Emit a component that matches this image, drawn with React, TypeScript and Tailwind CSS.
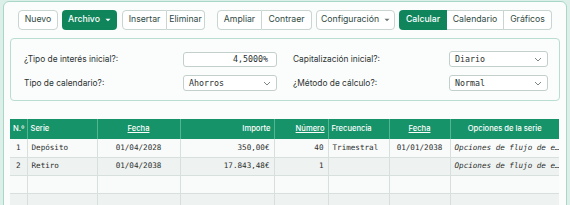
import React from "react";

const ui = { fontFamily: "Inter, 'Noto Sans', sans-serif" };
const mono = { fontFamily: "'DejaVu Sans Mono', 'Liberation Mono', monospace" };

function Caret({ color }: { color: string }) {
  return (
    <svg width="6" height="4" viewBox="0 0 6 4" className="ml-[5px]">
      <path d="M0.5 0.8 L3 3.2 L5.5 0.8 Z" fill={color} />
    </svg>
  );
}

function Chevron() {
  return (
    <svg width="8" height="5" viewBox="0 0 8 5">
      <path d="M1 1 L4 4 L7 1" fill="none" stroke="#7c8784" strokeWidth="1" />
    </svg>
  );
}

const btn =
  "flex h-[20px] items-center justify-center bg-white text-[8.7px] text-[#2f4a42] border border-[#c8d5d0]";

function Select({ value, w }: { value: string; w: string }) {
  return (
    <div
      className={`flex h-[16px] ${w} items-center justify-between rounded-[3px] border border-[#c3cfca] bg-white pl-[5px] pr-[5px] text-[8.3px] text-[#2b2f2e]`}
      style={mono}
    >
      <span>{value}</span>
      <Chevron />
    </div>
  );
}

type Row = {
  n: string;
  serie: string;
  fecha: string;
  importe: string;
  numero: string;
  freq: string;
  fecha2: string;
  op: string;
};

const rows: Row[] = [
  {
    n: "1",
    serie: "Depósito",
    fecha: "01/04/2028",
    importe: "350,00€",
    numero: "40",
    freq: "Trimestral",
    fecha2: "01/01/2038",
    op: "Opciones de flujo de e…",
  },
  {
    n: "2",
    serie: "Retiro",
    fecha: "01/04/2038",
    importe: "17.843,48€",
    numero: "1",
    freq: "",
    fecha2: "",
    op: "Opciones de flujo de e…",
  },
  { n: "", serie: "", fecha: "", importe: "", numero: "", freq: "", fecha2: "", op: "" },
  { n: "", serie: "", fecha: "", importe: "", numero: "", freq: "", fecha2: "", op: "" },
];

export default function App() {
  const th = "h-[20px] border-l border-[#53b690] px-[3px] text-[7.6px] font-medium text-white";
  const td = "h-[18px] border-l border-b border-[#d8e0dd] px-[4px] text-[7.6px] text-[#2b2f2e] whitespace-nowrap overflow-hidden";
  return (
    <div className="h-[205px] w-[570px] overflow-hidden bg-[#dcefe8] pl-[3px] pr-[3px] pt-[1px]" style={ui}>
      <div className="h-[240px] rounded-[6px] border border-[#a9d7c5] bg-[#fbfdfc] px-[6px] pt-[8px]">
        {/* toolbar */}
        <div className="ml-[8px] flex h-[20px] items-center">
          <div className={`${btn} w-[40px] rounded-[4px]`}>Nuevo</div>
          <div className="ml-[4px] flex h-[20px] w-[55px] items-center justify-center rounded-[4px] bg-[#10855c] text-[8.7px] font-medium text-white">
            Archivo
            <Caret color="#ffffff" />
          </div>
          <div className="ml-[5px] flex">
            <div className={`${btn} w-[45px] rounded-l-[4px]`}>Insertar</div>
            <div className={`${btn} w-[38px] rounded-r-[4px] border-l-0`}>Eliminar</div>
          </div>
          <div className="ml-[12px] flex">
            <div className={`${btn} w-[45px] rounded-l-[4px]`}>Ampliar</div>
            <div className={`${btn} w-[50px] rounded-r-[4px] border-l-0`}>Contraer</div>
          </div>
          <div className={`${btn} ml-[4px] w-[79px] rounded-[4px]`}>
            Configuración
            <Caret color="#6b7774" />
          </div>
          <div className="ml-[4px] flex">
            <div className="flex h-[20px] w-[48px] items-center justify-center rounded-l-[4px] bg-[#10855c] text-[8.7px] font-medium text-white">
              Calcular
            </div>
            <div className={`${btn} w-[57px] border-l-0`}>Calendario</div>
            <div className={`${btn} w-[48px] rounded-r-[4px] border-l-0`}>Gráficos</div>
          </div>
        </div>

        {/* params */}
        <div className="mt-[8px] h-[63px] rounded-[4px] border border-[#b9ddcf] bg-[#fbfdfc] pl-[13px] pt-[12px]">
          <div className="grid grid-cols-[253px_255px] gap-x-[16px] gap-y-[8px] text-[8.35px] text-[#2d3331]">
            <div className="flex h-[16px] items-center justify-between">
              <span>¿Tipo de interés inicial?:</span>
              <div
                className="flex h-[15px] w-[94px] items-center justify-end rounded-[3px] border border-[#c3cfca] bg-white pr-[8px] text-[8.3px] text-[#2b2f2e]"
                style={mono}
              >
                4,5000%
              </div>
            </div>
            <div className="flex h-[16px] items-center justify-between">
              <span>Capitalización inicial?:</span>
              <Select value="Diario" w="w-[99px]" />
            </div>
            <div className="flex h-[16px] items-center justify-between">
              <span>Tipo de calendario?:</span>
              <Select value="Ahorros" w="w-[94px]" />
            </div>
            <div className="flex h-[16px] items-center justify-between">
              <span>¿Método de cálculo?:</span>
              <Select value="Normal" w="w-[99px]" />
            </div>
          </div>
        </div>

        {/* table */}
        <table className="mt-[18px] w-[549px] table-fixed border-collapse">
          <colgroup>
            <col className="w-[17px]" />
            <col className="w-[70px]" />
            <col className="w-[83px]" />
            <col className="w-[94px]" />
            <col className="w-[54px]" />
            <col className="w-[61px]" />
            <col className="w-[61px]" />
            <col className="w-[109px]" />
          </colgroup>
          <thead>
            <tr className="bg-[#17936a]">
              <th className={`${th} border-l-0 text-left px-[2px]`}>N.º</th>
              <th className={`${th} text-left`}>Serie</th>
              <th className={`${th} text-center`}>
                <span className="underline">Fecha</span>
              </th>
              <th className={`${th} text-right`}>Importe</th>
              <th className={`${th} text-right`}>
                <span className="underline">Número</span>
              </th>
              <th className={`${th} text-left`}>Frecuencia</th>
              <th className={`${th} text-center`}>
                <span className="underline">Fecha</span>
              </th>
              <th className={`${th} text-center`}>Opciones de la serie</th>
            </tr>
          </thead>
          <tbody style={mono}>
            {rows.map((r, i) => (
              <tr key={i} className={i % 2 === 0 ? "bg-[#f9fbfa]" : "bg-[#eef2f0]"}>
                <td className={`${td} border-l-0 text-center px-[2px]`}>{r.n}</td>
                <td className={`${td} text-left`}>{r.serie}</td>
                <td className={`${td} text-center`}>{r.fecha}</td>
                <td className={`${td} text-right`}>{r.importe}</td>
                <td className={`${td} text-right`}>{r.numero}</td>
                <td className={`${td} text-left`}>{r.freq}</td>
                <td className={`${td} text-center`}>{r.fecha2}</td>
                <td className={`${td} text-left italic`}>{r.op}</td>
              </tr>
            ))}
          </tbody>
        </table>
      </div>
    </div>
  );
}
